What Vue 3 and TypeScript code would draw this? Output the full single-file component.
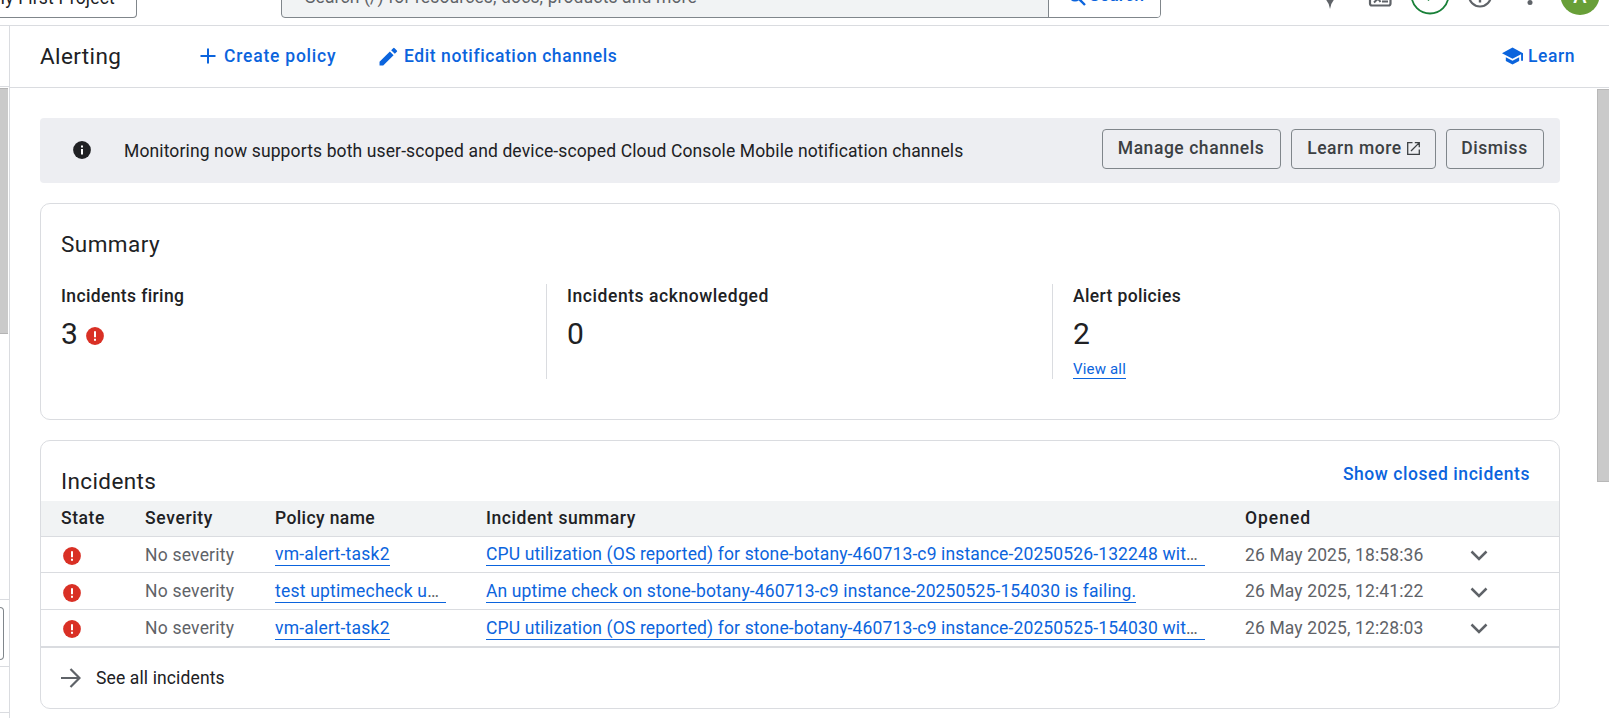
<script setup lang="ts">
interface Incident {
  policy: string
  policyCut: boolean
  summary: string
  summaryCut: boolean
  opened: string
}

const incidents: Incident[] = [
  {
    policy: 'vm-alert-task2',
    policyCut: false,
    summary: 'CPU utilization (OS reported) for stone-botany-460713-c9 instance-20250526-132248 wit',
    summaryCut: true,
    opened: '26 May 2025, 18:58:36',
  },
  {
    policy: 'test uptimecheck u',
    policyCut: true,
    summary: 'An uptime check on stone-botany-460713-c9 instance-20250525-154030 is failing.',
    summaryCut: false,
    opened: '26 May 2025, 12:41:22',
  },
  {
    policy: 'vm-alert-task2',
    policyCut: false,
    summary: 'CPU utilization (OS reported) for stone-botany-460713-c9 instance-20250525-154030 wit',
    summaryCut: true,
    opened: '26 May 2025, 12:28:03',
  },
]
</script>

<template>
  <div class="app">
    <header class="topbar">
      <div class="project"><span class="project-name">My First Project</span></div>
      <div class="search">
        <div class="search-input"><span>Search (/) for resources, docs, products and more</span></div>
        <div class="search-btn">
          <svg width="19" height="19" viewBox="0 0 19 19"><circle cx="7" cy="7" r="5.5" fill="none" stroke="#0b64dd" stroke-width="2" /><path d="M11 11l6 6" stroke="#0b64dd" stroke-width="2.4" /></svg>
          <span>Search</span>
        </div>
      </div>
      <svg class="tools" width="290" height="50" viewBox="0 0 290 50">
        <path d="M11 15q1.500 11 12 15q-10.500 3-12 14q-1.500-11-12-14q10.500-4 12-15z" fill="#5f6368" />
        <rect x="51" y="23" width="20.500" height="17.500" rx="2" fill="none" stroke="#5f6368" stroke-width="2.200" />
        <path d="M55 37.500l4-4 2.500 3.500M63 36.500h6" fill="none" stroke="#5f6368" stroke-width="2" />
        <circle cx="111" cy="30" r="18.500" fill="#fff" stroke="#188038" stroke-width="1.800" />
        <path d="M104 30l5.500 5 8-9" fill="none" stroke="#188038" stroke-width="1.500" />
        <circle cx="161" cy="30.500" r="11" fill="none" stroke="#5f6368" stroke-width="2.200" />
        <path d="M161 29v8.500" stroke="#5f6368" stroke-width="2.400" />
        <g fill="#5f6368"><circle cx="211" cy="22.500" r="2.500" /><circle cx="211" cy="30" r="2.500" /><circle cx="211" cy="37.500" r="2.500" /></g>
        <circle cx="261" cy="30.500" r="19.500" fill="#689f38" />
        <text x="261" y="38" text-anchor="middle" class="avatar">A</text>
      </svg>
    </header>

    <div class="body">
      <nav class="rail">
        <div class="rail-head"></div>
        <div class="rail-scroll"><div class="rail-thumb"></div></div>
        <div class="rail-row rail-release"><div class="rail-field"></div></div>
        <div class="rail-row rail-notes"></div>
        <div class="rail-row rail-rest"></div>
      </nav>

      <div class="page">
        <div class="page-head">
          <h1>Alerting</h1>
          <a class="action create">
            <svg width="16" height="16" viewBox="0 0 16 16"><path d="M8 .5v15M.5 8h15" stroke="currentColor" stroke-width="2" /></svg>
            Create policy
          </a>
          <a class="action edit">
            <svg width="19" height="19" viewBox="0 0 18 18"><path d="M.5 14v3.500H4L13.800 7.700 10.300 4.200zM16.900 4.600a1 1 0 0 0 0-1.400L14.800 1.100a1 1 0 0 0-1.400 0L11.500 3 15 6.500z" fill="currentColor" /></svg>
            Edit notification channels
          </a>
          <a class="action learn">
            <svg width="21" height="18" viewBox="0 0 22 18"><path d="M4 10.200v4L11 18l7-3.800v-4L11 14zM11 0L0 6l11 6 9-4.900V14h2V6z" fill="currentColor" /></svg>
            Learn
          </a>
        </div>

        <div class="viewport">
          <main class="content">
            <section class="banner">
              <svg class="info" width="18" height="18" viewBox="0 0 18 18"><circle cx="9" cy="9" r="8.900" fill="#202124" /><path d="M8 8h2v5.500H8zM8 4.500h2v2H8z" fill="#fff" /></svg>
              <p>Monitoring now supports both user-scoped and device-scoped Cloud Console Mobile notification channels</p>
              <button class="btn manage">Manage channels</button>
              <button class="btn more">
                Learn more
                <svg width="13" height="13" viewBox="0 0 13 13"><path d="M5.500.7H.7v11.600h11.600V7.500M7.800.7h4.500v4.500M12.100.9L4 9" fill="none" stroke="currentColor" stroke-width="1.300" /></svg>
              </button>
              <button class="btn dismiss">Dismiss</button>
            </section>

            <section class="card summary">
              <h2>Summary</h2>
              <div class="stats">
                <div class="stat">
                  <h3 class="tight">Incidents firing</h3>
                  <div class="value">3
                    <svg class="error" width="18" height="18" viewBox="0 0 18 18"><circle cx="9" cy="9" r="8.900" fill="#d93025" /><path d="M8 4.300h2v6H8zM8 11.700h2v2H8z" fill="#fff" /></svg>
                  </div>
                </div>
                <div class="stat">
                  <h3>Incidents acknowledged</h3>
                  <div class="value">0</div>
                </div>
                <div class="stat">
                  <h3 class="tight">Alert policies</h3>
                  <div class="value">2</div>
                  <a class="view-all">View all</a>
                </div>
              </div>
            </section>

            <section class="card incidents">
              <div class="card-head">
                <h2>Incidents</h2>
                <a class="closed">Show closed incidents</a>
              </div>
              <div class="row head">
                <span>State</span>
                <span class="h-severity">Severity</span>
                <span class="h-policy">Policy name</span>
                <span>Incident summary</span>
                <span class="h-opened">Opened</span>
              </div>
              <div v-for="(item, i) in incidents" :key="i" class="row item">
                <svg class="error" width="18" height="18" viewBox="0 0 18 18"><circle cx="9" cy="9" r="8.900" fill="#d93025" /><path d="M8 4.300h2v6H8zM8 11.700h2v2H8z" fill="#fff" /></svg>
                <span class="severity">No severity</span>
                <span class="cell policy"><a class="link" :class="{ cut: item.policyCut }">{{ item.policy }}<i v-if="item.policyCut">…</i></a></span>
                <span class="cell"><a class="link" :class="{ cut: item.summaryCut }">{{ item.summary }}<i v-if="item.summaryCut">…</i></a></span>
                <span>{{ item.opened }}</span>
                <svg class="chev" width="18" height="12" viewBox="0 0 18 12"><path d="M1.500 1.500L9 9l7.500-7.500" fill="none" stroke="#5f6368" stroke-width="2.500" /></svg>
              </div>
              <div class="see-all">
                <svg width="20" height="20" viewBox="0 0 20 20"><path d="M0 10h18M9.500 1l9 9-9 9" fill="none" stroke="#5f6368" stroke-width="2.200" /></svg>
                <span>See all incidents</span>
              </div>
            </section>
          </main>
          <div class="scrollbar"><div class="thumb"></div></div>
        </div>
      </div>
    </div>
  </div>
</template>

<style>
body {
  margin: 0;
  overflow: hidden;
  background: #fff;
}
</style>

<style scoped>
.app {
  width: 1609px;
  height: 718px;
  overflow: hidden;
  display: flex;
  flex-direction: column;
  font: 17.5px/24px Roboto, "Open Sans", sans-serif;
  letter-spacing: 0.125px;
  color: #202124;
}
.app * {
  box-sizing: border-box;
}
h1, h2, h3, p {
  margin: 0;
  font-weight: 400;
}

.topbar {
  height: 26px;
  flex: none;
  border-bottom: 1px solid #dadce0;
  display: flex;
  align-items: flex-end;
  overflow: hidden;
}
.project {
  width: 137px;
  height: 40px;
  margin-bottom: 7px;
  border: 1px solid #80868b;
  border-left: 0;
  border-radius: 0 4px 4px 0;
  display: flex;
  justify-content: flex-end;
  padding: 7px 21px 0 0;
  white-space: nowrap;
  flex: none;
}
.project-name {
  letter-spacing: 0.2px;
}
.search {
  width: 880px;
  height: 40px;
  margin: 0 0 7px 144px;
  border: 1px solid #80868b;
  border-radius: 4px;
  background: #f1f3f4;
  display: flex;
  flex: none;
  overflow: hidden;
}
.search-input {
  width: 767px;
  border-right: 1px solid #80868b;
  padding: 6px 0 0 23px;
  color: #5f6368;
}
.search-btn {
  flex: 1;
  background: #fff;
  padding: 4px 0 0 19px;
  display: flex;
  gap: 2px;
  color: #0b64dd;
  font-weight: 500;
}
.search-btn svg {
  margin-top: 5px;
}
.tools {
  flex: none;
  margin: 0 0 10px 158px;
}
.avatar {
  font: 500 20px Roboto, sans-serif;
  fill: #fff;
}

.body {
  flex: 1;
  display: flex;
  min-height: 0;
}
.rail {
  width: 10px;
  flex: none;
  border-right: 1px solid #dadce0;
  display: flex;
  flex-direction: column;
}
.rail-head {
  height: 61px;
  border-bottom: 1px solid #dadce0;
}
.rail-scroll {
  height: 512px;
  padding-top: 1px;
}
.rail-thumb {
  width: 8px;
  height: 246px;
  background: #cacaca;
  border-top: 1px solid #b4b4b4;
  border-bottom: 1px solid #b4b4b4;
}
.rail-row {
  border-top: 1px solid #dadce0;
}
.rail-release {
  height: 67px;
  padding-top: 7px;
}
.rail-field {
  width: 4px;
  height: 53px;
  border: 1px solid #80868b;
  border-left: 0;
  border-radius: 0 4px 4px 0;
}
.rail-notes {
  height: 46px;
}
.rail-rest {
  flex: 1;
}

.page {
  flex: 1;
  display: flex;
  flex-direction: column;
  min-width: 0;
}
.page-head {
  height: 62px;
  flex: none;
  border-bottom: 1px solid #dadce0;
  display: flex;
  align-items: center;
  padding: 0 34px 1px 30px;
}
h1 {
  width: 160px;
  font-size: 22.5px;
  line-height: 30px;
  letter-spacing: 0.4px;
}
.action {
  display: flex;
  align-items: center;
  color: #0b64dd;
  font-weight: 500;
  white-space: nowrap;
}
.create {
  width: 179px;
  gap: 8px;
  letter-spacing: 0.78px;
}
.edit {
  gap: 6px;
  letter-spacing: 0.58px;
}
.learn {
  margin-left: auto;
  gap: 5px;
  letter-spacing: 0.56px;
}

.viewport {
  flex: 1;
  display: flex;
  min-height: 0;
}
.content {
  width: 1550px;
  padding: 30px 0 0 30px;
}
.scrollbar {
  width: 12px;
  margin-left: auto;
  padding-top: 1px;
}
.thumb {
  height: 393px;
  background: #cacaca;
  border: 1px solid #b8b8b8;
  border-right: 0;
}

.banner {
  height: 65px;
  background: #edeef2;
  border-radius: 4px;
  display: flex;
  padding: 11px 16px 0 33px;
}
.banner p {
  width: 978px;
  margin: 10px 0 0 33px;
  white-space: nowrap;
}
.info {
  margin-top: 12px;
  flex: none;
}
.btn {
  height: 40px;
  flex: none;
  padding: 0 1px 2px 0;
  border: 1px solid #80868b;
  border-radius: 4px;
  background: transparent;
  font: 500 17.5px/24px Roboto, sans-serif;
  letter-spacing: 0.55px;
  color: #3c4043;
  display: flex;
  align-items: center;
  justify-content: center;
}
.manage {
  width: 179px;
}
.more {
  width: 145px;
  margin: 0 10px;
  padding-right: 0;
  gap: 5px;
}
.dismiss {
  width: 98px;
}

.card {
  border: 1px solid #dadce0;
  border-radius: 10px;
}
h2 {
  font-size: 22.5px;
  line-height: 30px;
  letter-spacing: 0.38px;
}
.summary {
  height: 217px;
  margin-top: 20px;
  padding: 25px 0 0;
}
.summary h2 {
  padding-left: 20px;
  letter-spacing: 0.44px;
}
.stats {
  margin-top: 25px;
  display: grid;
  grid-template-columns: 505px 506px 1fr;
}
.stat {
  height: 95px;
  padding-left: 20px;
}
.stat + .stat {
  border-left: 1px solid #dadce0;
}
h3 {
  font-size: 17.5px;
  line-height: 24px;
  font-weight: 500;
  letter-spacing: 0.56px;
}
h3.tight {
  letter-spacing: 0.37px;
}
.value {
  height: 40px;
  margin-top: 6px;
  font-size: 30px;
  line-height: 40px;
  display: flex;
  align-items: center;
  gap: 8px;
}
.value .error {
  margin-top: 4px;
}
.view-all {
  display: inline-block;
  height: 19px;
  margin-top: 6px;
  border-bottom: 1px solid #0b64dd;
  color: #0b64dd;
  font-size: 15px;
  line-height: 19px;
  letter-spacing: 0.17px;
}

.incidents {
  height: 269px;
  margin-top: 20px;
}
.card-head {
  height: 60px;
  padding: 0 29px 0 20px;
  display: flex;
  justify-content: space-between;
}
.card-head h2 {
  padding-top: 25px;
}
.closed {
  padding-top: 21px;
  color: #0b64dd;
  font-weight: 500;
  letter-spacing: 0.56px;
}
.row {
  display: grid;
  grid-template-columns: 84px 130px 211px 759px 225px 1fr;
  padding-left: 20px;
  align-items: center;
  border-bottom: 1px solid #dadce0;
  white-space: nowrap;
}
.head {
  height: 36px;
  background: #f1f3f4;
  font-weight: 500;
  letter-spacing: 0.55px;
  padding-bottom: 1px;
}
.h-severity {
  letter-spacing: 0.65px;
}
.h-policy {
  letter-spacing: 0.39px;
}
.h-opened {
  letter-spacing: 0.97px;
}
.item {
  height: 37px;
  color: #5f6368;
}
.item:nth-child(3) {
  height: 36px;
}
.item:nth-child(5) {
  height: 38px;
  border-bottom-width: 2px;
}
.item .error {
  margin: 2px 0 0 2px;
}
.item:nth-child(4) .error,
.item:nth-child(4) .chev {
  margin-top: 4px;
}
.severity {
  letter-spacing: 0.21px;
}
.cell {
  display: flex;
}
.link {
  display: block;
  height: 23px;
  line-height: 23px;
  color: #0b64dd;
  border-bottom: 1px solid #0b64dd;
  letter-spacing: 0.135px;
}
.policy .link {
  letter-spacing: 0.22px;
}
.link.cut {
  padding-right: 7px;
}
.link i {
  font-style: normal;
  color: #5f6368;
  letter-spacing: 0;
}
.chev {
  margin-top: 2px;
  justify-self: start;
}
.see-all {
  height: 60px;
  padding-left: 20px;
  display: flex;
  align-items: center;
  gap: 15px;
}
.see-all span {
  margin-top: -1px;
}
</style>
